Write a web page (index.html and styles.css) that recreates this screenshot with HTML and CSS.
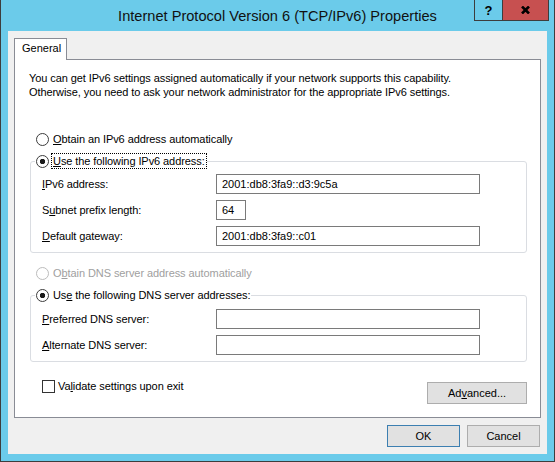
FILE: index.html
```html
<!DOCTYPE html>
<html lang="en">
<head>
    <meta charset="UTF-8">
    <title>Internet Protocol Version 6 (TCP/IPv6) Properties</title>
    <link rel="stylesheet" href="styles.css">
</head>
<body>
    <div class="window">
        <div class="titlebar">
            <div></div>
            <div class="title">Internet Protocol Version 6 (TCP/IPv6) Properties</div>
            <div class="caption-buttons">
                <button class="caption-btn help">?</button>
                <button class="caption-btn close">
                    <svg width="9" height="8" viewBox="0 0 9 8">
                        <path d="M1 0.5 L8 7.5 M8 0.5 L1 7.5" stroke="#000" stroke-width="2.6" fill="none"/>
                    </svg>
                </button>
            </div>
        </div>

        <div class="client">
            <div class="tab">General</div>

            <div class="tab-panel">
                <p class="intro">
                    You can get IPv6 settings assigned automatically if your network supports this capability.<br>
                    Otherwise, you need to ask your network administrator for the appropriate IPv6 settings.
                </p>

                <label class="option indent">
                    <input type="radio" name="ip">
                    <span><u>O</u>btain an IPv6 address automatically</span>
                </label>

                <fieldset class="group">
                    <legend>
                        <label class="option">
                            <input type="radio" name="ip" checked>
                            <span class="focus"><u>U</u>se the following IPv6 address:</span>
                        </label>
                    </legend>
                    <div class="fields">
                        <label for="ipv6"><u>I</u>Pv6 address:</label>
                        <input id="ipv6" class="text-input" value="2001:db8:3fa9::d3:9c5a">
                        <label for="prefix">S<u>u</u>bnet prefix length:</label>
                        <input id="prefix" class="text-input short" value="64">
                        <label for="gateway"><u>D</u>efault gateway:</label>
                        <input id="gateway" class="text-input" value="2001:db8:3fa9::c01">
                    </div>
                </fieldset>

                <label class="option indent disabled dns-auto">
                    <input type="radio" name="dns" disabled>
                    <span>O<u>b</u>tain DNS server address automatically</span>
                </label>

                <fieldset class="group">
                    <legend>
                        <label class="option">
                            <input type="radio" name="dns" checked>
                            <span>Us<u>e</u> the following DNS server addresses:</span>
                        </label>
                    </legend>
                    <div class="fields dns">
                        <label for="dns1"><u>P</u>referred DNS server:</label>
                        <input id="dns1" class="text-input">
                        <label for="dns2"><u>A</u>lternate DNS server:</label>
                        <input id="dns2" class="text-input">
                    </div>
                </fieldset>

                <div class="footer">
                    <label class="option check">
                        <input type="checkbox">
                        <span>Va<u>l</u>idate settings upon exit</span>
                    </label>
                    <button class="btn advanced">Ad<u>v</u>anced...</button>
                </div>
            </div>

            <div class="dialog-buttons">
                <button class="btn default">OK</button>
                <button class="btn">Cancel</button>
            </div>
        </div>
    </div>
</body>
</html>
```

FILE: styles.css
```css
body {
    margin: 0;
    font-family: "Liberation Sans", Arial, sans-serif;
    font-size: 11px;
    color: #000;
}

.window {
    width: 555px;
    height: 462px;
    box-sizing: border-box;
    background: #6bcbea;
    border: 1px solid #3d3d3d;
    border-top: none;
    display: flex;
    flex-direction: column;
}

.titlebar {
    height: 31px;
    flex-shrink: 0;
    display: grid;
    grid-template-columns: 1fr auto 1fr;
    align-items: center;
}

.title {
    font-size: 14.6px;
    white-space: nowrap;
    color: #111;
}

.caption-buttons {
    justify-self: end;
    align-self: start;
    display: flex;
    margin-right: 5px;
}

.caption-btn {
    height: 21px;
    box-sizing: border-box;
    border: 1px solid #3d3d3d;
    border-top: none;
    background: transparent;
    padding: 0;
    display: flex;
    align-items: center;
    justify-content: center;
}

.help {
    width: 29px;
    font-family: "Liberation Sans", Arial, sans-serif;
    font-weight: bold;
    font-size: 13px;
    color: #000;
}

.close {
    width: 46px;
    border-left: none;
    background: #c75050;
}

.client {
    flex: 1;
    margin: 0 7px 7px;
    background: #f0f0f0;
    padding: 7px 6px 7px;
    display: flex;
    flex-direction: column;
}

.tab {
    align-self: flex-start;
    width: 53px;
    height: 22px;
    box-sizing: border-box;
    border: 1px solid #898c95;
    border-bottom: none;
    background: #fff;
    padding: 2px 0 0 7px;
    line-height: 14px;
    margin-bottom: -1px;
    position: relative;
    z-index: 1;
}

.tab-panel {
    height: 359px;
    box-sizing: border-box;
    border: 1px solid #898c95;
    background: #fff;
    padding: 11px 13px 0 14px;
    letter-spacing: -0.08px;
}

.intro {
    margin: 0 0 32px;
    line-height: 14px;
}

.option {
    display: flex;
    align-items: center;
    gap: 4px;
    height: 16px;
    line-height: 16px;
    white-space: nowrap;
}

.option.indent {
    margin-left: 7px;
}

.option input[type="radio"] {
    appearance: none;
    width: 13px;
    height: 13px;
    margin: 0;
    box-sizing: border-box;
    border: 1px solid #3c3c3c;
    border-radius: 50%;
    background: #fff;
    flex-shrink: 0;
}

.option input[type="radio"]:checked {
    background: radial-gradient(circle, #1a1a1a 2.4px, #fff 3px);
}

.option.disabled {
    color: #a0a0a0;
}

.option.disabled input[type="radio"] {
    border-color: #bcbcbc;
}

.focus {
    line-height: 14px;
    padding: 0 1px;
    margin-left: -1px;
    outline: 1px dotted #000;
}

.group {
    margin: 6px 0 0 1px;
    padding: 0;
    border: 1px solid #dadde2;
    border-radius: 3px;
    min-width: 0;
}

.group legend {
    margin-left: 4px;
    padding: 0 1px;
}

.fields {
    display: grid;
    grid-template-columns: 174px auto;
    row-gap: 6px;
    align-items: center;
    justify-items: start;
    padding: 5px 0 6px 11px;
}

.fields.dns {
    padding-top: 6px;
}

.text-input {
    width: 264px;
    height: 20px;
    box-sizing: border-box;
    margin: 0;
    border: 1px solid #7a7a7a;
    padding: 0 5px;
    font: inherit;
    color: #000;
    background: #fff;
    outline: none;
}

.text-input.short {
    width: 30px;
}

.dns-auto {
    margin-top: 12px;
}

.footer {
    display: flex;
    justify-content: space-between;
    align-items: flex-start;
    margin-top: 16px;
}

.option.check {
    margin-left: 13px;
    gap: 3px;
}

.option input[type="checkbox"] {
    appearance: none;
    width: 13px;
    height: 13px;
    margin: 0;
    box-sizing: border-box;
    border: 1px solid #333;
    background: #fff;
}

.btn {
    height: 22px;
    box-sizing: border-box;
    border: 1px solid #adadad;
    background: #e1e1e1;
    font: inherit;
    color: #000;
    padding: 0;
}

.btn.advanced {
    width: 100px;
    margin-top: 4px;
}

.dialog-buttons {
    display: flex;
    justify-content: flex-end;
    gap: 7px;
    margin-top: 7px;
    padding-right: 1px;
}

.dialog-buttons .btn {
    width: 73px;
}

.btn.default {
    border-color: #3c7fb1;
}
```
